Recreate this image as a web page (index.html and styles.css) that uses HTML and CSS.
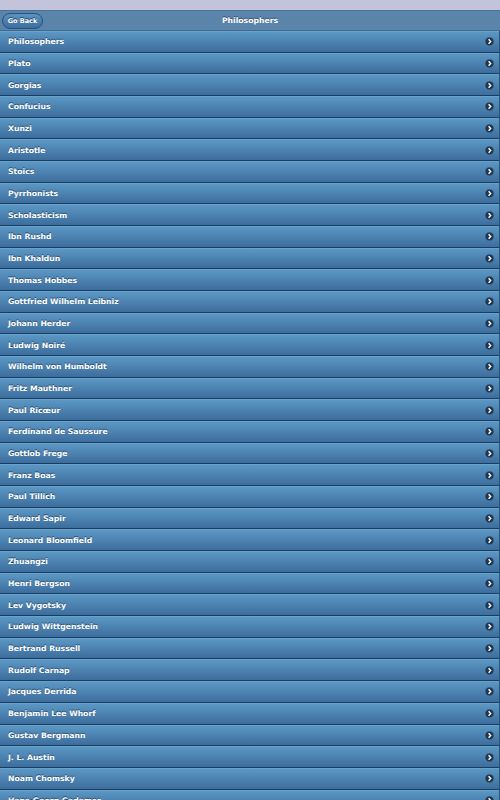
FILE: index.html
```
<!doctype html>
<html lang="en">
<head>
  <meta charset="utf-8">
  <meta name="viewport" content="width=device-width,initial-scale=1">
  <title>Philosophers</title>
  <link rel="stylesheet" href="styles.css">
</head>
<body>
  <div class="topstrip"></div>
  <div class="header">
    <a class="back" href="#">Go Back</a>
    <h1>Philosophers</h1>
  </div>
  <ul class="list" id="list"></ul>

  <script>
    var names = ['Philosophers','Plato','Gorgias','Confucius','Xunzi','Aristotle','Stoics','Pyrrhonists','Scholasticism','Ibn Rushd','Ibn Khaldun','Thomas Hobbes','Gottfried Wilhelm Leibniz','Johann Herder','Ludwig Noiré','Wilhelm von Humboldt','Fritz Mauthner','Paul Ricœur','Ferdinand de Saussure','Gottlob Frege','Franz Boas','Paul Tillich','Edward Sapir','Leonard Bloomfield','Zhuangzi','Henri Bergson','Lev Vygotsky','Ludwig Wittgenstein','Bertrand Russell','Rudolf Carnap','Jacques Derrida','Benjamin Lee Whorf','Gustav Bergmann','J. L. Austin','Noam Chomsky','Hans-Georg Gadamer']
    var arrow = '<svg class="arrow" viewBox="0 0 10 10" width="9" height="9"><circle cx="5" cy="5" r="4.7" fill="#1c3550" stroke="#4a6f93" stroke-width=".6"/><path d="M4 2.6 L6.3 5 L4 7.4" fill="none" stroke="#fff" stroke-width="1.6"/></svg>'
    var list = document.getElementById('list')
    names.forEach(function(n){
      var li = document.createElement('li')
      li.innerHTML = '<a href="#"><span>'+n+'</span>'+arrow+'</a>'
      list.appendChild(li)
    })
  </script>
</body>
</html>
```

FILE: styles.css
```
body{margin:0;background:#fff;font-family:"DejaVu Sans",Verdana,sans-serif}
.topstrip{height:10px;background:#c4c3dc}
.header{height:19px;background:#5b84ab;border-top:1px solid #4b739a;border-bottom:1px solid #3f6a93;display:flex;align-items:center;justify-content:center;position:relative}
.header h1{margin:0;font-size:7.7px;font-weight:bold;color:#fff;text-shadow:0 -1px 0 #2c4a68}
.back{position:absolute;left:2px;top:2px;height:14px;width:39px;border:1px solid #2a5178;border-radius:8px;background:linear-gradient(#5a94c2,#3d6d9c);color:#fff;font-size:6.5px;font-weight:bold;text-decoration:none;display:flex;align-items:center;justify-content:center;text-shadow:0 -1px 0 #1d3a58}
.list{list-style:none;margin:0;padding:0}
.list li{border-bottom:1px solid #163e62;border-right:1px solid #2b5479}
.list a{height:20.68px;display:flex;align-items:center;justify-content:space-between;padding:0 5px 0 8px;background:linear-gradient(#5b97c4,#3d6d9d);color:#fff;text-decoration:none;font-size:7.7px;font-weight:bold;text-shadow:0 -1px 0 #23476b;border-top:1px solid #6aa2cc;box-sizing:border-box}
.arrow{display:block;flex:none}
```
